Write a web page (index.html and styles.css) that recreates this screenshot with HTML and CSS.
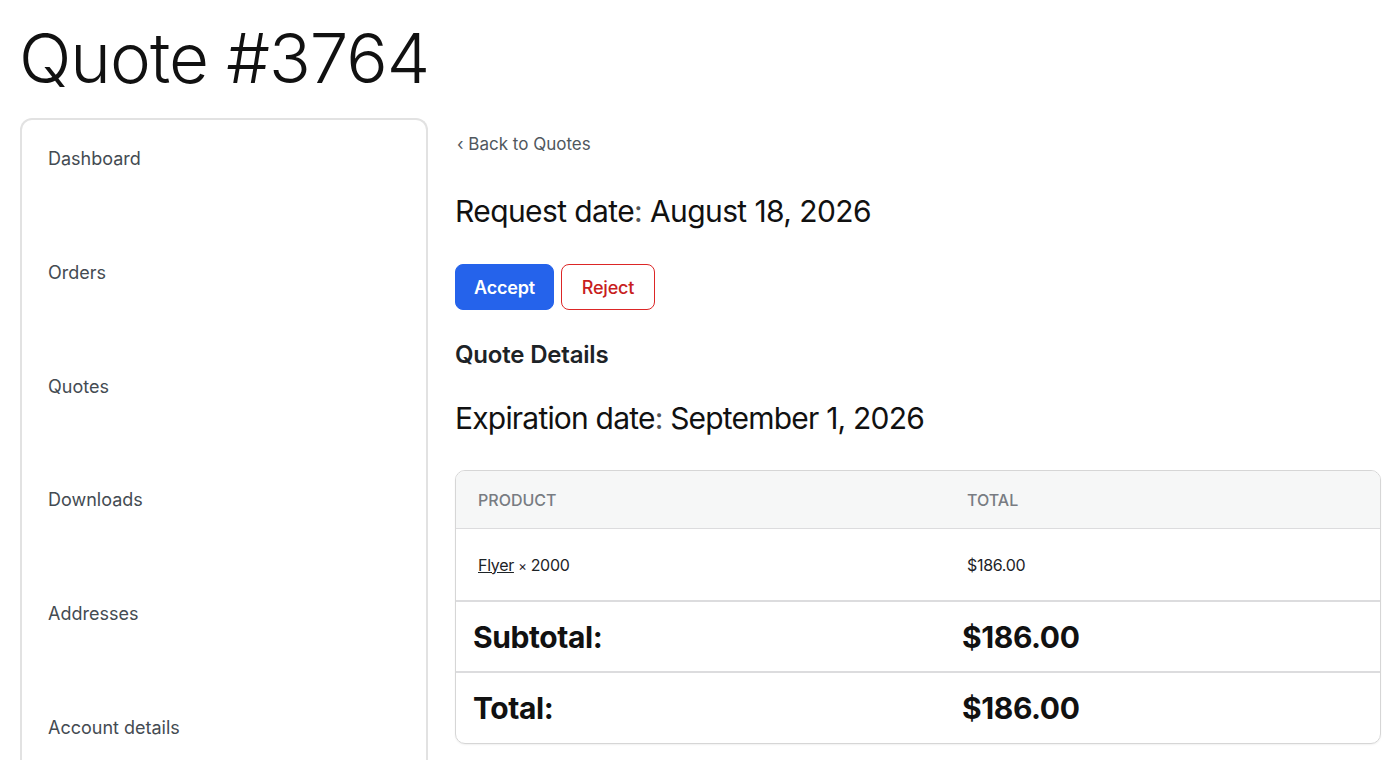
FILE: index.html
```html
<!DOCTYPE html>
<html>
<head>
<meta charset="utf-8">
<link rel="stylesheet" href="styles.css">
</head>
<body>
<h1 class="page-title">Quote #3764</h1>
<div class="layout">
  <nav class="sidebar">
    <a class="nav-item" href="#">Dashboard</a>
    <a class="nav-item" href="#">Orders</a>
    <a class="nav-item" href="#">Quotes</a>
    <a class="nav-item" href="#">Downloads</a>
    <a class="nav-item" href="#">Addresses</a>
    <a class="nav-item" href="#">Account details</a>
  </nav>
  <main class="content">
    <a class="back-link" href="#">&lsaquo; Back to Quotes</a>
    <h2 class="date-line">Request date<span class="colon">:</span> August 18, 2026</h2>
    <div class="actions">
      <button class="btn btn-accept">Accept</button>
      <button class="btn btn-reject">Reject</button>
    </div>
    <h3 class="section-title">Quote Details</h3>
    <h2 class="date-line exp">Expiration date<span class="colon">:</span> September 1, 2026</h2>
    <div class="table-wrap">
      <table class="details">
        <thead>
          <tr><th class="c1">Product</th><th>Total</th></tr>
        </thead>
        <tbody>
          <tr class="item"><td class="c1"><a href="#">Flyer</a> <span class="qty">&times;</span> 2000</td><td>$186.00</td></tr>
        </tbody>
        <tfoot>
          <tr><th class="c1">Subtotal:</th><td>$186.00</td></tr>
          <tr><th class="c1">Total:</th><td>$186.00</td></tr>
        </tfoot>
      </table>
    </div>
  </main>
</div>
</body>
</html>
```
FILE: styles.css
```css
html, body {
  margin: 0;
  padding: 0;
  background: #ffffff;
}
body {
  font-family: Inter, "Open Sans", sans-serif;
  color: #111111;
  overflow: hidden;
  height: 761px;
}
.page-title {
  margin: 0;
  padding: 17px 0 0 19px;
  font-size: 69px;
  font-weight: 300;
  line-height: 82px;
  letter-spacing: -1px;
  color: #111;
}
.layout {
  display: flex;
  gap: 27px;
  padding: 19px 20px 0 20px;
  height: 661px;
  box-sizing: border-box;
}
.sidebar {
  width: 408px;
  flex: none;
  border: 2px solid #e2e2e2;
  border-bottom: none;
  border-radius: 12px 12px 0 0;
  padding: 27px 0 0 26px;
  box-sizing: border-box;
  height: 642px;
  display: flex;
  flex-direction: column;
  gap: 90.8px;
}
.nav-item {
  font-size: 18px;
  line-height: 23px;
  color: #444b52;
  text-decoration: none;
}
.content {
  flex: 1;
  display: flex;
  flex-direction: column;
  align-items: flex-start;
  padding-top: 14px;
}
.back-link {
  font-size: 17px;
  line-height: 24px;
  color: #50575e;
  text-decoration: none;
  padding-left: 2px;
}
.date-line {
  margin: 35px 0 0 0;
  font-size: 30px;
  font-weight: 400;
  line-height: 40px;
  letter-spacing: -0.6px;
  color: #111;
}
.colon {
  color: #555;
}
.actions {
  display: flex;
  gap: 7px;
  margin-top: 33px;
}
.btn {
  font-family: Inter, sans-serif;
  font-size: 18px;
  height: 46px;
  border-radius: 8px;
  padding: 0 10px;
  cursor: pointer;
  letter-spacing: -0.2px;
}
.btn-accept {
  background: #2563eb;
  border: 1px solid #2563eb;
  color: #fff;
  font-weight: 600;
  width: 99px;
}
.btn-reject {
  background: #fff;
  border: 1px solid #dc2626;
  color: #c81e1e;
  font-weight: 500;
  width: 94px;
}
.section-title {
  margin: 30px 0 0 0;
  font-size: 24px;
  font-weight: 600;
  line-height: 30px;
  letter-spacing: -0.2px;
  color: #1d2327;
}
.date-line.exp {
  margin-top: 28px;
  letter-spacing: -0.8px;
}
.table-wrap {
  margin-top: 32px;
  width: 924px;
  border: 1px solid #d6d6d6;
  border-radius: 10px;
  overflow: hidden;
  box-shadow: 0 1px 2px rgba(0,0,0,0.06);
}
.details {
  width: 100%;
  border-collapse: collapse;
  table-layout: fixed;
}
.details .c1 {
  width: 445px;
}
.details thead th {
  background: #f6f7f7;
  height: 57px;
  text-align: left;
  font-size: 16px;
  font-weight: 500;
  text-transform: uppercase;
  color: #787c82;
  padding: 0 22px;
  border-bottom: 1px solid #dcdcde;
}
.details .item td {
  height: 71px;
  font-size: 16px;
  color: #1d2327;
  padding: 0 22px;
  border-bottom: 2px solid #dcdcde;
  letter-spacing: -0.3px;
}
.details .item td a {
  color: #1d2327;
}
.details .item .qty {
  font-size: 13px;
}
.details tfoot th,
.details tfoot td {
  height: 70px;
  text-align: left;
  font-size: 30px;
  font-weight: 700;
  padding: 0 17px;
  color: #111;
  letter-spacing: -0.4px;
}
.details tfoot tr:first-child th,
.details tfoot tr:first-child td {
  height: 69px;
  border-bottom: 2px solid #dcdcde;
}
```
